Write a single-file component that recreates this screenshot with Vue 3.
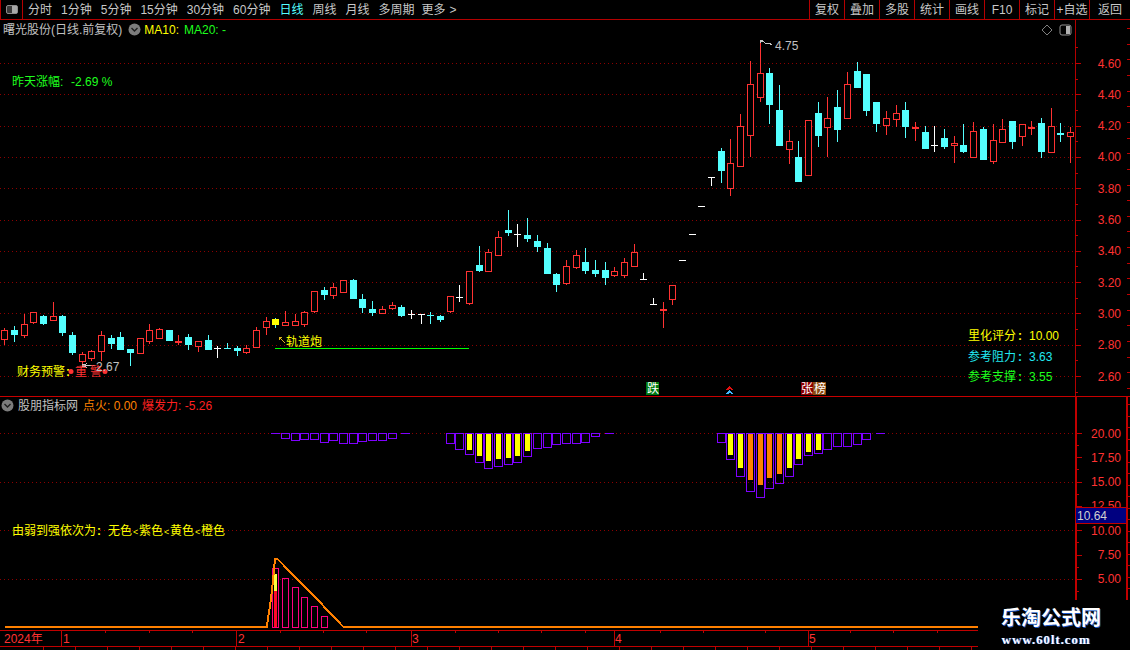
<script setup>
const RED = '#ff3232', CY = '#54ffff', WH = '#ffffff', YE = '#ffff00'

const periods = ['分时', '1分钟', '5分钟', '15分钟', '30分钟', '60分钟', '日线', '周线', '月线', '多周期']
const actions = ['复权', '叠加', '多股', '统计', '画线', 'F10', '标记', '+自选', '返回']

// kind, x, high, top, bottom, low
const candles = [
  ['r',4,328,330,339,344],['c',14,326,330,334,341],['r',24,314,324,335,337],['r',33,312,312,322,323],
  ['c',43,315,316,323,324],['r',53,302,316,320,320],['c',62,315,316,332,335],['c',72,332,335,352,354],
  ['r',82,352,354,361,365],['r',91,350,351,358,360],['r',101,331,335,351,360],['c',111,335,338,343,348],
  ['c',120,332,337,349,349],['c',130,349,349,352,365],['r',140,338,338,353,353],['r',149,324,330,341,343],
  ['r',159,328,329,338,338],['c',169,330,330,340,340],['rd',178,335,341,341,344],['c',188,334,337,344,349],
  ['r',198,341,341,346,351],['c',208,335,340,349,349],['wd',217,346,348,348,357],['cd',227,343,348,348,348],
  ['c',237,346,348,350,355],['r',246,345,348,352,353],['r',256,327,330,347,347],['r',266,317,321,327,334],
  ['y',275,318,319,324,327],['r',285,311,322,325,325],['r',295,314,321,325,325],['r',304,311,312,324,326],
  ['r',314,291,291,311,312],['c',324,287,290,294,299],['r',333,283,287,295,298],['r',343,280,280,292,292],
  ['c',353,279,280,298,298],['c',362,294,299,307,312],['c',372,301,309,312,315],['r',382,306,309,313,313],
  ['r',392,302,305,308,309],['c',401,305,307,315,316],['wd',411,310,314,314,318],['wd',421,314,314,314,323],
  ['cd',430,312,315,315,323],['c',440,315,316,319,321],['r',450,296,296,311,312],['wd',459,285,297,297,301],
  ['r',469,271,271,303,304],['c',479,246,265,270,271],['r',488,249,252,271,271],['r',498,231,237,255,255],
  ['c',508,210,230,232,235],['wd',517,224,234,234,246],['c',527,218,235,238,241],['c',537,235,241,246,251],
  ['c',547,243,248,273,273],['c',556,273,274,284,291],['r',566,260,266,283,284],['r',576,250,255,267,268],
  ['c',585,248,262,270,273],['c',595,260,270,273,276],['c',605,262,270,277,284],['r',614,267,271,275,276],
  ['r',624,258,262,275,277],['r',634,244,252,266,266],['wd',643,273,279,279,279],['wd',653,298,304,304,304],
  ['rd',663,302,309,309,327],['r',672,285,285,299,304],['wd',682,260,260,260,260],['wd',692,234,234,234,234],
  ['wd',701,206,206,206,206],['wd',711,177,177,177,185],['c',721,148,151,170,182],['r',730,139,163,188,195],
  ['r',740,114,126,166,166],['r',750,61,84,135,156],['r',760,40,73,97,101],['c',769,68,73,104,123],
  ['c',779,85,110,145,145],['r',789,130,141,149,163],['c',798,141,157,181,181],['r',808,120,120,175,175],
  ['c',818,102,113,135,146],['r',827,97,118,127,156],['c',837,90,107,129,141],['r',847,72,84,118,118],
  ['c',857,62,71,87,87],['c',866,74,74,110,115],['c',876,102,102,123,131],['r',886,111,118,125,134],
  ['r',896,105,113,119,126],['c',905,102,110,126,137],['rd',915,122,127,127,140],['c',925,126,132,148,148],
  ['wd',934,126,145,145,151],['c',944,129,138,146,148],['r',954,136,143,145,162],['c',963,124,145,151,152],
  ['r',973,122,131,157,157],['c',983,127,129,159,159],['r',993,124,140,161,163],['r',1002,119,129,142,142],
  ['c',1012,121,121,141,148],['r',1022,124,124,136,145],['rd',1031,121,127,127,134],['c',1041,118,123,151,157],
  ['r',1051,108,126,152,152],['cd',1060,123,133,133,141],['r',1070,127,132,136,162]
]

const wicks = []
const solids = []
const hollows = []
for (const [k, x, h, t, b, l] of candles) {
  const base = k[0]
  const color = base === 'r' ? RED : base === 'w' ? WH : CY
  if (l > h) wicks.push({ x, y: h, h: l - h + 1, color: base === 'y' ? CY : color })
  if (k.endsWith('d')) {
    solids.push({ x: x - 3, y: t, w: 7, h: base === 'r' || x === 1060 ? 2 : 1, color })
  } else if (k === 'r') {
    hollows.push({ x: x - 2.5, y: t + 0.5, w: 6, h: b - t, color })
  } else {
    solids.push({ x: x - 3, y: t, w: 7, h: b - t + 1, color: k === 'y' ? YE : color })
  }
}

const mainLabels = ['4.60','4.40','4.20','4.00','3.80','3.60','3.40','3.20','3.00','2.80','2.60']
  .map((t, i) => ({ t, y: 63 + 31.3 * i }))
const mainMinor = Array.from({ length: 12 }, (_, i) => 47.35 + 31.3 * i)
const mainOuter = Array.from({ length: 24 }, (_, i) => 28 + 15.65 * i)

const subLabels = ['20.00','17.50','15.00','12.50','10.00','7.50','5.00']
  .map((t, i) => ({ t, y: 433 + 24.3 * i }))
const subMinor = subLabels.map(l => l.y + 12.15)
const subOuter = Array.from({ length: 20 }, (_, i) => 404 + 11.5 * i)
const subGrid = [433, 481.6, 530.2, 578.8]

// x, bottom, fill bottom, fill colour
const Y = YE, O = '#ff8000'
const boxes = [
  [285,438],[295,440],[304,439],[314,439],[324,442],[333,440],[343,443],[353,443],[362,441],[372,440],[382,440],[392,438],
  [450,443],[459,449],[469,454,450,Y],[479,462,456,Y],[488,468,461,Y],[498,466,459,Y],[508,464,458,Y],[517,462,456,Y],[527,456,451,Y],
  [537,448],[547,447],[556,444],[566,443],[576,443],[585,442],[595,436],
  [721,442],[730,459,455,Y],[740,476,468,Y],[750,491,480,O],[760,497,485,O],[769,488,478,O],[779,483,474,O],[789,476,468,Y],
  [798,464,459,Y],[808,455,452,Y],[818,453,450,Y],[827,449],[837,446],[847,446],[857,444],[866,439]
]
const flats = [271, 401, 605, 876]

const pinks = [[272,568],[282,578],[292,587],[301,597],[311,606],[321,616]]

const legend = [
  { x: 108, t: '无色' }, { x: 133, t: '<', small: true },
  { x: 139, t: '紫色' }, { x: 164, t: '<', small: true },
  { x: 170, t: '黄色' }, { x: 195, t: '<', small: true },
  { x: 201, t: '橙色' }
]

const stats = [
  { y: 340, label: '里化评分', value: '10.00', cls: 'yellow' },
  { y: 361, label: '参考阻力', value: '3.63', cls: 'cyan' },
  { y: 381, label: '参考支撑', value: '3.55', cls: 'green' }
]

const timeMarks = [[65,'1',61],[240,'2',236],[414,'3',411],[617,'4',614],[811,'5',808]]
const timeTicks = [105,149,192,280,323,366,455,498,541,585,660,703,765,850,893,937]
const lowTicks = Array.from({ length: 30 }, (_, i) => 43 + 32 * i)
</script>

<template>
  <div class="app">
    <header class="toolbar">
      <div class="toggle">
        <svg width="14" height="11" viewBox="0 0 14 11"><rect x="1.5" y="1.5" width="11" height="8" rx="1.5" class="ic-box" /><rect x="7" y="2" width="5" height="7" class="ic-fill" /></svg>
      </div>
      <nav class="periods">
        <span v-for="p in periods" :key="p" :class="{ active: p === '日线' }">{{ p }}</span>
        <span class="more">更多<i>&gt;</i></span>
      </nav>
      <div class="actions">
        <button v-for="a in actions" :key="a" type="button">{{ a }}</button>
      </div>
    </header>

    <section class="panel main">
      <div class="plot">
        <svg width="1075" height="376" viewBox="0 20 1075 376" class="chart">
          <defs>
            <pattern id="dots" x="0" y="0" width="4" height="1" patternUnits="userSpaceOnUse">
              <rect width="1" height="1" fill="#8c0000" />
            </pattern>
          </defs>
          <rect v-for="l in mainLabels" :key="l.t" x="0" :y="Math.round(l.y)" width="1075" height="1" fill="url(#dots)" />
          <rect v-for="(w, i) in wicks" :key="'w' + i" :x="w.x" :y="w.y" width="1" :height="w.h" :fill="w.color" />
          <g v-for="(b, i) in hollows" :key="'h' + i">
            <rect :x="b.x" :y="b.y" :width="b.w" :height="b.h" fill="#000" :stroke="b.color" />
          </g>
          <rect v-for="(s, i) in solids" :key="'s' + i" :x="s.x" :y="s.y" :width="s.w" :height="s.h" :fill="s.color" />

          <line x1="275" x2="469" y1="348.5" y2="348.5" class="gline" />
          <path d="M285 343 L279 337 M279 337 h3 M279 337 v3" class="orbit" />
          <text x="286" y="346" class="t yellow">轨道炮</text>

          <path d="M763 41 l-3 0 l0 2 M760 41 l3 -1 M763 41 l3 3 l3 -1 l3 2" class="note" />
          <text x="775" y="50" class="t grey">4.75</text>

          <text x="12" y="86" class="t green">昨天涨幅:</text>
          <text x="71" y="86" class="t green">-2.69 %</text>

          <path d="M95 365.5 H84 M84 365.5 l3 -2 M84 365.5 l3 2" class="note" />
          <rect x="82" y="364" width="3" height="3" fill="#c8c8c8" />
          <text x="17" y="376" class="t yellow">财务预警</text>
          <text x="66" y="376" class="t yellow strong">:</text>
          <circle cx="71" cy="371.5" r="2.5" :fill="RED" class="plain" />
          <text x="75" y="376" class="t red">重</text>
          <text x="90" y="376" class="t red">警</text>
          <circle cx="105" cy="371.5" r="2.5" :fill="RED" class="plain" />
          <text x="96" y="371" class="t grey">2.67</text>

          <g v-for="s in stats" :key="s.label">
            <text x="968" :y="s.y" class="t" :class="s.cls">{{ s.label }}</text>
            <text x="1018" :y="s.y" class="t strong" :class="s.cls">:</text>
            <text x="1029" :y="s.y" class="t" :class="s.cls">{{ s.value }}</text>
          </g>

          <rect x="646" y="382" width="13" height="13" fill="#007a10" />
          <text x="647" y="393" class="t white">跌</text>
          <rect x="801" y="382" width="12" height="13" fill="#8b0000" />
          <text x="801" y="393" class="t white">张</text>
          <rect x="813" y="382" width="13" height="13" fill="#8b4a10" />
          <text x="814" y="393" class="t white">榜</text>

          <path d="M726 390 L729.5 386 L733 390 H731 L729.5 388.5 L728 390 Z" fill="#e01010" />
          <path d="M726 394 L729.5 390 L733 394 H731 L729.5 392.5 L728 394 Z" fill="#40b8ff" />
        </svg>
        <div class="head">
          <span class="name">曙光股份(日线.前复权)</span>
          <svg class="drop" width="13" height="13" viewBox="0 0 13 13"><circle cx="6.5" cy="6.5" r="6" fill="#7c7c7c" /><path d="M3.5 5 L6.5 8 L9.5 5" fill="none" stroke="#1e1e1e" stroke-width="1.4" /></svg>
          <span class="yellow-h">MA10:</span>
          <span class="green-h">MA20: -</span>
        </div>
        <div class="corner">
          <svg width="12" height="12" viewBox="0 0 12 12"><path d="M6 1 L11 6 L6 11 L1 6 Z" fill="none" stroke="#808080" /></svg>
          <svg width="13" height="12" viewBox="0 0 13 12"><rect x="1" y="1" width="11" height="10" rx="2" fill="none" stroke="#909090" /><rect x="7" y="2" width="4" height="8" fill="#b0b0b0" /></svg>
        </div>
      </div>
      <div class="axis">
        <svg width="55" height="376" viewBox="1075 20 55 376" class="chart">
          <g v-for="l in mainLabels" :key="l.t">
            <rect x="1075" :y="Math.round(l.y)" width="6" height="1" class="tick" />
            <text x="1121" :y="l.y + 4.5" text-anchor="end" class="t red">{{ l.t }}</text>
          </g>
          <rect v-for="m in mainMinor" :key="m" x="1075" :y="Math.round(m)" width="3" height="1" class="tick" />
          <rect v-for="m in mainOuter" :key="m" x="1127" :y="Math.round(m)" width="3" height="1" class="tick" />
        </svg>
      </div>
    </section>

    <section class="panel sub">
      <div class="plot">
        <svg width="1075" height="233" viewBox="0 397 1075 233" class="chart">
          <defs>
            <pattern id="dots2" x="0" y="0" width="4" height="1" patternUnits="userSpaceOnUse">
              <rect width="1" height="1" fill="#8c0000" />
            </pattern>
          </defs>
          <rect v-for="g in subGrid" :key="g" x="0" :y="Math.round(g)" width="1075" height="1" fill="url(#dots2)" />
          <rect v-for="b in boxes.filter(b => b[3])" :key="'f' + b[0]" :x="b[0] - 2" y="433" width="5" :height="b[2] - 433" :fill="b[3]" />
          <rect v-for="b in boxes" :key="'b' + b[0]" :x="b[0] - 3.5" y="433.5" width="8" :height="b[1] - 433" class="box" />
          <rect v-for="f in flats" :key="f" :x="f" y="433" width="9" height="1" class="flat" />

          <text x="12" y="535" class="t yellow">由弱到强依次为</text>
          <text x="97" y="535" class="t yellow strong">:</text>
          <text v-for="e in legend" :key="e.x" :x="e.x" y="535" class="t yellow" :class="{ lt: e.small }">{{ e.t }}</text>

          <rect v-for="p in pinks" :key="p[0]" :x="p[0] + 0.5" :y="p[1] + 0.5" width="6" :height="627 - p[1]" class="pink" />
          <rect x="274" y="591" width="3" height="36" fill="#ff0a28" />
          <rect x="274" y="574" width="3" height="17" fill="#ffff40" />
          <polyline points="5,626.5 267,626.5 268,618 270,606 272,590 274,570 275,558.5 277,558.5 318,600 328,611 343,626.5 978,626.5" class="spark" />
        </svg>
        <div class="head sub-head">
          <svg class="drop2" width="13" height="13" viewBox="0 0 13 13"><circle cx="6.5" cy="6.5" r="6" fill="#7c7c7c" /><path d="M3.5 5 L6.5 8 L9.5 5" fill="none" stroke="#1e1e1e" stroke-width="1.4" /></svg>
          <span class="name">股朋指标网</span>
          <span class="orange-h">点火: 0.00</span>
          <span class="red-h">爆发力: -5.26</span>
        </div>
      </div>
      <div class="axis sub-axis">
        <svg width="55" height="233" viewBox="1075 397 55 233" class="chart">
          <g v-for="l in subLabels" :key="l.t">
            <rect x="1077" :y="Math.round(l.y)" width="5" height="1" class="tick" />
            <text x="1121" :y="l.y + 4.5" text-anchor="end" class="t red">{{ l.t }}</text>
          </g>
          <rect v-for="m in subMinor" :key="m" x="1077" :y="Math.round(m)" width="2" height="1" class="tick" />
          <rect v-for="m in subOuter" :key="m" x="1128" :y="Math.round(m)" width="2" height="1" class="tick" />
        </svg>
        <div class="price">10.64</div>
      </div>
    </section>

    <footer class="time">
      <svg width="1130" height="20" viewBox="0 630 1130 20" class="chart">
        <rect x="0" y="630" width="1130" height="1" class="tick" />
        <rect x="0" y="646" width="1130" height="1" class="tick" />
        <rect v-for="t in timeTicks" :key="t" :x="t" y="631" width="1" height="2" class="tick" />
        <rect v-for="t in lowTicks" :key="t" :x="t" y="647" width="1" height="3" class="tick" />
        <text x="4" y="643" class="t red">2024年</text>
        <g v-for="m in timeMarks" :key="m[0]">
          <rect :x="m[2]" y="630" width="1" height="16" class="tick" />
          <text :x="m[0] - 2" y="643" class="t red">{{ m[1] }}</text>
        </g>
      </svg>
    </footer>

    <div class="mark">
      <div class="mark-cn">乐淘公式网</div>
      <div class="mark-en">www.60lt.com</div>
    </div>
  </div>
</template>

<style>
html, body { margin: 0; background: #000; }
</style>

<style scoped>
.app {
  position: relative;
  width: 1130px;
  height: 650px;
  overflow: hidden;
  background: #000;
  color: #c8c8c8;
  font: 12px/1 "Liberation Sans", "Noto Sans CJK SC", sans-serif;
}
.toolbar {
  display: flex;
  height: 19px;
  border-bottom: 1px solid #b40000;
  box-sizing: content-box;
}
.toggle {
  display: flex;
  align-items: center;
  justify-content: center;
  width: 23px;
  border-left: 1px solid #b40000;
  border-right: 1px solid #b40000;
  box-sizing: border-box;
}
.ic-box { fill: #3a3a3a; stroke: #8c8c8c; }
.ic-fill { fill: #a8a8a8; }
.periods {
  display: flex;
  align-items: center;
  gap: 9px;
  padding-left: 5px;
  flex: 1;
}
.periods .active { color: #54ffff; }
.more { margin-left: -2px; }
.more i { font-style: normal; margin-left: 4px; }
.actions { display: flex; }
.actions button {
  width: 35px;
  height: 19px;
  padding: 0;
  border: 0;
  border-left: 1px solid #b40000;
  background: none;
  color: #c8c8c8;
  font: inherit;
}
.actions button:last-child { width: 41px; }

.panel { display: flex; }
.main { height: 376px; border-bottom: 1px solid #c80000; }
.sub { height: 233px; }
.plot { position: relative; width: 1075px; }
.axis { position: relative; width: 55px; border-left: 1px solid #b40000; box-sizing: border-box; }
.axis .chart { margin-left: -1px; }
.sub-axis { width: 53px; border-left: 2px solid #c00000; border-right: 2px solid #c00000; }
.sub-axis .chart { margin-left: -2px; }
.chart { display: block; overflow: hidden; shape-rendering: crispEdges; }

.tick { fill: #c00000; }
.gline { stroke: #00ff00; }
.orbit { stroke: #d8b020; fill: none; }
.note { stroke: #c8c8c8; fill: none; }
.box { fill: none; stroke: #7f00ff; }
.flat { fill: #7f00ff; }
.pink { fill: none; stroke: #ff0080; }
.spark { fill: none; stroke: #ff8000; stroke-width: 2; }
.plain { shape-rendering: auto; }

.t { font-size: 12px; shape-rendering: auto; }
.strong { font-weight: 700; }
.lt { font-size: 9px; }
.yellow { fill: #ffff00; }
.green { fill: #1eff1e; }
.cyan { fill: #20e8f0; }
.red { fill: #ff3232; }
.grey { fill: #c0c0c0; }
.white { fill: #ffffff; }

.head {
  position: absolute;
  top: 3px;
  left: 3px;
  display: flex;
  align-items: center;
  height: 13px;
}
.name { color: #c0c0c0; }
.drop { margin-left: 6px; }
.yellow-h { color: #ffff00; margin-left: 3px; }
.green-h { color: #1eff1e; margin-left: 5px; }
.sub-head { top: 2px; left: 1px; }
.sub-head .name { margin-left: 4px; }
.orange-h { color: #ff8000; margin-left: 5px; }
.red-h { color: #ff2020; margin-left: 5px; }

.corner {
  position: absolute;
  top: 4px;
  right: 3px;
  display: flex;
  gap: 6px;
}
.price {
  position: absolute;
  top: 110px;
  left: -2px;
  width: 52px;
  height: 17px;
  box-sizing: border-box;
  padding: 2px 0 0 1px;
  border: 1px solid #c00000;
  background: #000080;
  color: #d0d0d0;
}
.time { height: 21px; }
.mark {
  position: absolute;
  top: 600px;
  left: 978px;
  width: 152px;
  height: 50px;
  background: #000;
  color: #fff;
  text-align: center;
}
.mark-cn {
  margin-top: 8px;
  margin-left: -1px;
  margin-right: 5px;
  font-size: 20px;
  font-weight: 700;
  line-height: 21px;
  text-shadow: 1px 1px 0 #1e5ac8;
}
.mark-en {
  margin-top: 3px;
  margin-right: 16px;
  font: 700 13px/15px "Liberation Serif", serif;
  letter-spacing: 0.9px;
  text-shadow: 1px 0 0 #1e5ac8;
}
</style>
